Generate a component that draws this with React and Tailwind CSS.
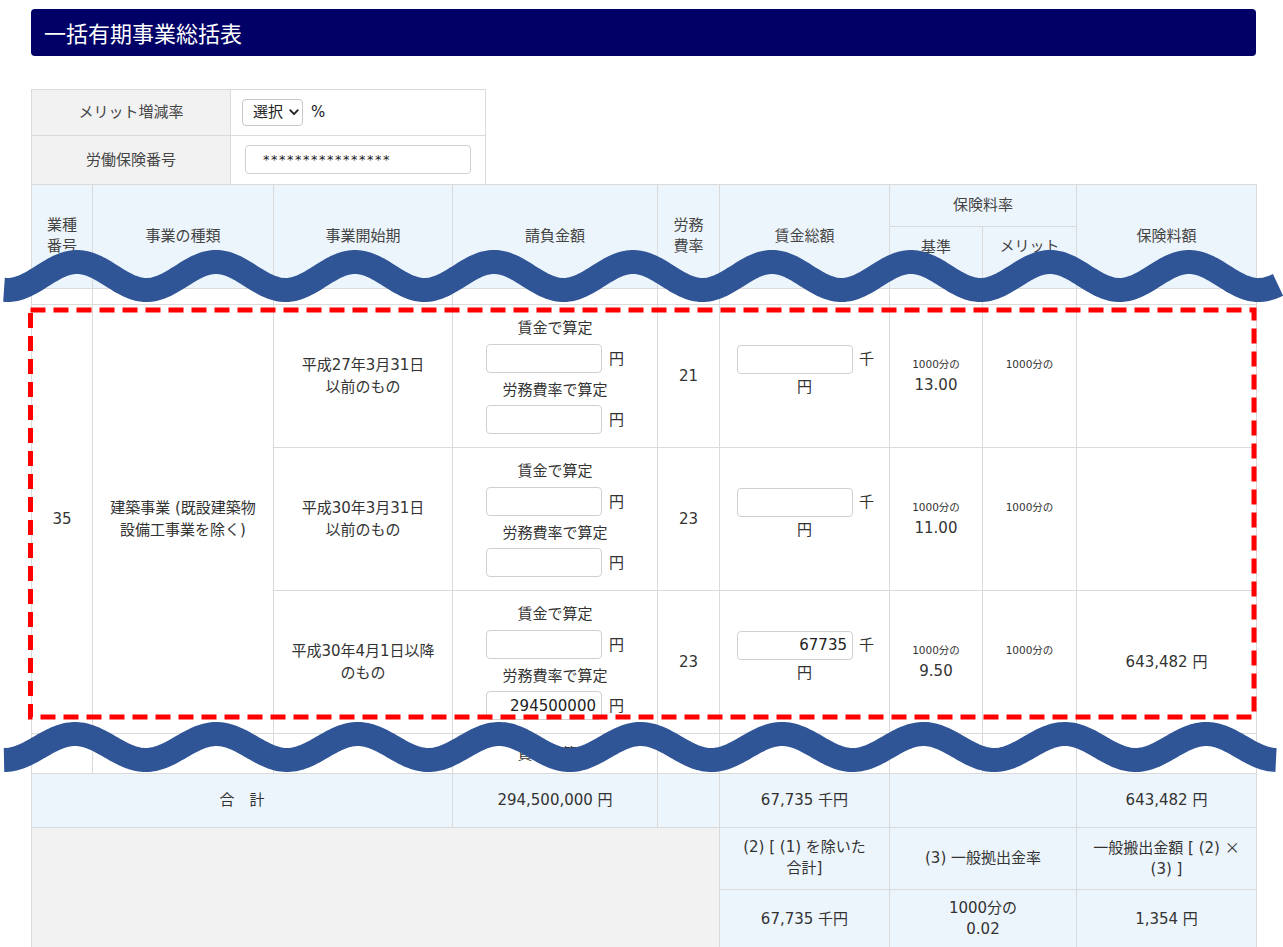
import React from "react";

function wavePath(x0, x1, c, A, crest, P) {
  let d = "";
  for (let x = x0; x <= x1; x += 2) {
    const y = c - A * Math.cos((2 * Math.PI * (x - crest)) / P);
    d += (x === x0 ? "M" : "L") + x.toFixed(1) + " " + y.toFixed(2) + " ";
  }
  return d;
}

const WAVE1 = wavePath(4, 1278, 276, 14, 77, 139);
const WAVE2 = wavePath(4, 1276, 747, 13, 75, 141.4);

const B = "border border-[#dadada]";
const TH = `${B} bg-[#edf5fc] font-normal text-[#444] text-[15px] leading-[21px] text-center align-middle p-0`;
const TD = `${B} bg-white text-[#333] text-[15px] leading-[22px] text-center align-middle p-0`;
const TDB = `${B} bg-[#edf5fc] text-[#333] text-[15px] leading-[21px] text-center align-middle p-0`;

function Field({ value }) {
  return (
    <input
      readOnly
      defaultValue={value}
      className="w-[116px] h-[29px] rounded-[4px] border border-[#d0d0d0] bg-white pr-[5px] text-right text-[15px] text-[#222] outline-none"
    />
  );
}

function ContractCell({ v1, v2 }) {
  return (
    <td className={TD}>
      <div className="flex flex-col items-center">
        <div className="h-[22px]">賃金で算定</div>
        <div className="mt-[5px] flex items-center">
          <Field value={v1} />
          <span className="ml-[7px]">円</span>
        </div>
        <div className="mt-[6px] h-[22px]">労務費率で算定</div>
        <div className="mt-[4px] flex items-center">
          <Field value={v2} />
          <span className="ml-[7px]">円</span>
        </div>
      </div>
    </td>
  );
}

function WageCell({ v }) {
  return (
    <td className={TD}>
      <div className="flex flex-col items-center pb-[9px]">
        <div className="flex items-center pl-[2px]">
          <Field value={v} />
          <span className="ml-[6px]">千</span>
        </div>
        <div className="mt-[2px] h-[22px]">円</div>
      </div>
    </td>
  );
}

function RateCell({ v }) {
  return (
    <td className={TD}>
      <div className="flex flex-col items-center">
        <div className="text-[10.5px] leading-[16px]">1000分の</div>
        <div className="mt-[2px] h-[22px]">{v}</div>
      </div>
    </td>
  );
}

function DataRow({ first, period, c1, c2, rate, wage, base, fee }) {
  return (
    <tr className="h-[143px]">
      {first && (
        <>
          <td rowSpan={3} className={TD}>35</td>
          <td rowSpan={3} className={TD}>
            建築事業 (既設建築物
            <br />
            設備工事業を除く)
          </td>
        </>
      )}
      <td className={TD}>
        {period[0]}
        <br />
        {period[1]}
      </td>
      <ContractCell v1={c1} v2={c2} />
      <td className={TD}>{rate}</td>
      <WageCell v={wage} />
      <RateCell v={base} />
      <td className={TD}>
        <div className="flex flex-col items-center">
          <div className="text-[10.5px] leading-[16px]">1000分の</div>
          <div className="mt-[2px] h-[22px]"></div>
        </div>
      </td>
      <td className={TD}>{fee}</td>
    </tr>
  );
}

export default function App() {
  return (
    <div className="relative w-[1283px] min-h-[947px] bg-white font-[family-name:'DejaVu_Sans','Noto_Sans_CJK_JP',sans-serif] text-[#333]">
      <div className="pt-[9px] pl-[31px]">
        <div className="flex h-[47px] w-[1225px] items-center rounded-[4px] bg-[#000066] pl-[13px] text-[22px] text-white font-[family-name:'Noto_Sans_CJK_JP',sans-serif]">
          一括有期事業総括表
        </div>

        <table className="mt-[33px] w-[454px] table-fixed border-collapse">
          <colgroup>
            <col className="w-[199px]" />
            <col className="w-[255px]" />
          </colgroup>
          <tbody>
            <tr className="h-[46px]">
              <td className={`${B} bg-[#f2f2f2] text-center align-middle text-[15px] text-[#444]`}>
                メリット増減率
              </td>
              <td className={`${B} bg-white align-middle pl-[11px]`}>
                <div className="flex items-center">
                  <div className="flex h-[27px] w-[61px] items-center rounded-[4px] border border-[#c8c8c8] bg-white pl-[10px] text-[15px] text-[#222]">
                    <span>選択</span>
                    <svg className="ml-[6px]" width="10" height="7" viewBox="0 0 10 7">
                      <path d="M1.2 1.2 L5 5.2 L8.8 1.2" fill="none" stroke="#222" strokeWidth="1.8" strokeLinecap="round" strokeLinejoin="round" />
                    </svg>
                  </div>
                  <span className="ml-[8px] text-[15px] text-[#222]">%</span>
                </div>
              </td>
            </tr>
            <tr className="h-[48px]">
              <td className={`border-x border-t border-[#dadada] bg-[#f2f2f2] text-center align-middle text-[15px] text-[#444]`}>
                労働保険番号
              </td>
              <td className={`border-x border-t border-[#dadada] bg-white align-middle pl-[14px]`}>
                <input
                  readOnly
                  defaultValue="****************"
                  className="h-[29px] w-[226px] rounded-[4px] border border-[#d0d0d0] bg-white pl-[17px] text-[13px] tracking-[1.5px] text-[#222] outline-none"
                />
              </td>
            </tr>
          </tbody>
        </table>

        <table className="w-[1225px] table-fixed border-collapse">
          <colgroup>
            <col className="w-[61px]" />
            <col className="w-[181px]" />
            <col className="w-[179px]" />
            <col className="w-[205px]" />
            <col className="w-[62px]" />
            <col className="w-[170px]" />
            <col className="w-[93px]" />
            <col className="w-[94px]" />
            <col className="w-[180px]" />
          </colgroup>
          <tbody>
            <tr className="h-[42px]">
              <th rowSpan={2} className={`${TH} leading-[20px]`}>
                業種
                <br />
                番号
              </th>
              <th rowSpan={2} className={TH}>事業の種類</th>
              <th rowSpan={2} className={TH}>事業開始期</th>
              <th rowSpan={2} className={TH}>請負金額</th>
              <th rowSpan={2} className={`${TH} leading-[20px]`}>
                労務
                <br />
                費率
              </th>
              <th rowSpan={2} className={TH}>賃金総額</th>
              <th colSpan={2} className={TH}>保険料率</th>
              <th rowSpan={2} className={TH}>保険料額</th>
            </tr>
            <tr className="h-[62px]">
              <th className={`${TH} align-top pt-[10px]`}>基準</th>
              <th className={TH}>
                メリット
                <br />
                制
              </th>
            </tr>
            <tr className="h-[16px]">
              <td className={TD}></td>
              <td className={TD}></td>
              <td className={TD}></td>
              <td className={TD}></td>
              <td className={TD}></td>
              <td className={TD}></td>
              <td className={TD}></td>
              <td className={TD}></td>
              <td className={TD}></td>
            </tr>
            <DataRow
              first
              period={["平成27年3月31日", "以前のもの"]}
              c1=""
              c2=""
              rate="21"
              wage=""
              base="13.00"
              fee=""
            />
            <DataRow
              period={["平成30年3月31日", "以前のもの"]}
              c1=""
              c2=""
              rate="23"
              wage=""
              base="11.00"
              fee=""
            />
            <DataRow
              period={["平成30年4月1日以降", "のもの"]}
              c1=""
              c2="294500000"
              rate="23"
              wage="67735"
              base="9.50"
              fee="643,482 円"
            />
            <tr className="h-[40px]">
              <td className={TD}></td>
              <td className={TD}></td>
              <td className={TD}></td>
              <td className={`${TD} align-top pt-[9px]`}>賃金で算定</td>
              <td className={TD}></td>
              <td className={TD}></td>
              <td className={TD}></td>
              <td className={TD}></td>
              <td className={TD}></td>
            </tr>
            <tr className="h-[54px]">
              <td colSpan={3} className={TDB}>合　計</td>
              <td className={TDB}>294,500,000 円</td>
              <td className={TDB}></td>
              <td className={TDB}>67,735 千円</td>
              <td colSpan={2} className={TDB}></td>
              <td className={TDB}>643,482 円</td>
            </tr>
            <tr className="h-[62px]">
              <td colSpan={5} rowSpan={2} className={`${B} bg-[#f2f2f2]`}></td>
              <td className={TDB}>
                (2) [ (1) を除いた
                <br />
                合計]
              </td>
              <td colSpan={2} className={TDB}>(3) 一般拠出金率</td>
              <td className={TDB}>
                一般搬出金額 [ (2) <span className="font-[family-name:'Noto_Sans_CJK_JP',sans-serif]">×</span>
                <br />
                (3) ]
              </td>
            </tr>
            <tr className="h-[60px]">
              <td className={TDB}>67,735 千円</td>
              <td colSpan={2} className={TDB}>
                1000分の
                <br />
                0.02
              </td>
              <td className={TDB}>1,354 円</td>
            </tr>
          </tbody>
        </table>
      </div>

      <svg
        className="pointer-events-none absolute left-0 top-0"
        width="1283"
        height="947"
        viewBox="0 0 1283 947"
      >
        <rect
          x="30.5"
          y="310"
          width="1223.5"
          height="407"
          fill="none"
          stroke="#ff0000"
          strokeWidth="5"
          strokeDasharray="15 8"
        />
        <path d={WAVE1} fill="none" stroke="#2f5597" strokeWidth="24" />
        <path d={WAVE2} fill="none" stroke="#2f5597" strokeWidth="24" />
      </svg>
    </div>
  );
}
